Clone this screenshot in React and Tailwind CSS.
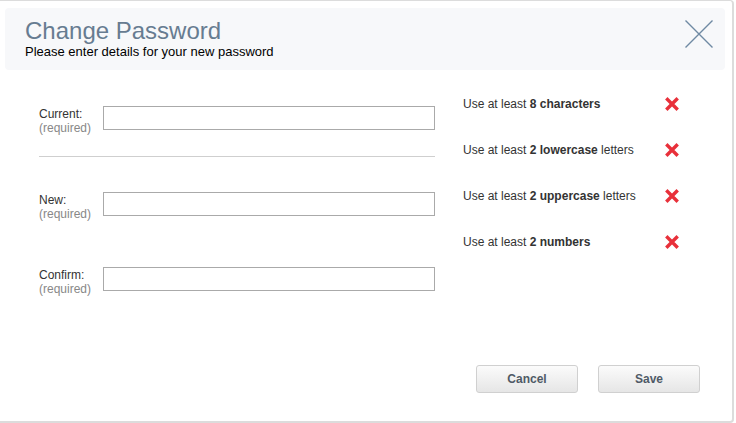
import React from 'react';

const rules = [
  { pre: 'Use at least ', bold: '8 characters', post: '' },
  { pre: 'Use at least ', bold: '2 lowercase', post: ' letters' },
  { pre: 'Use at least ', bold: '2 uppercase', post: ' letters' },
  { pre: 'Use at least ', bold: '2 numbers', post: '' },
];

function Cross() {
  return (
    <svg width="14" height="14" viewBox="0 0 14 14" className="shrink-0">
      <path d="M2.5 2.5L11.5 11.5M11.5 2.5L2.5 11.5" stroke="#e8303a" strokeWidth="3.4" strokeLinecap="square" />
    </svg>
  );
}

function Field({ label, className }) {
  return (
    <div className={`flex items-start ${className}`}>
      <div className="w-[64px] pt-[1px] text-[12px] leading-[14px]">
        <div className="text-[#333]">{label}</div>
        <div className="text-[#888]">(required)</div>
      </div>
      <input
        type="password"
        className="w-[332px] h-[24px] border border-[#aaa] bg-white outline-none"
      />
    </div>
  );
}

export default function App() {
  return (
    <div
      className="w-[736px] h-[423px] bg-white"
      style={{ fontFamily: '"Liberation Sans", Arial, sans-serif' }}
    >
      <div className="w-[734px] h-[423px] flex flex-col border-t border-r-2 border-b-2 border-[#dcdcdc] rounded-tr-[4px] rounded-br-[4px]">
        <div className="mt-[7px] ml-[5px] mr-[7px] h-[62px] rounded-[4px] bg-[#f7f8fa] flex items-start justify-between pl-[20px] pr-[11px]">
          <div className="mt-[10px]">
            <div className="text-[24px] leading-[26px] text-[#677c91]">Change Password</div>
            <div className="text-[13px] leading-[16px] text-black">Please enter details for your new password</div>
          </div>
          <svg width="30" height="30" viewBox="0 0 30 30" className="mt-[11px]">
            <path d="M1.5 1.5L28.5 28.5M28.5 1.5L1.5 28.5" stroke="#6f8aa3" strokeWidth="1.4" />
          </svg>
        </div>

        <div className="flex pl-[39px] mt-[36px]">
          <div className="w-[396px]">
            <Field label="Current:" />
            <div className="mt-[21px] h-px bg-[#cfcfcf]" />
            <Field label="New:" className="mt-[35px]" />
            <Field label="Confirm:" className="mt-[46px]" />
          </div>
          <div className="ml-[28px] -mt-[9px] flex flex-col gap-[32px]">
            {rules.map((r, i) => (
              <div key={i} className="flex items-center h-[14px]">
                <div className="w-[202px] text-[12px] leading-[14px] text-[#333]">
                  {r.pre}
                  <b>{r.bold}</b>
                  {r.post}
                </div>
                <Cross />
              </div>
            ))}
          </div>
        </div>

        <div className="mt-auto mb-[28px] flex justify-end gap-[20px] pr-[32px]">
          <button className="w-[102px] h-[28px] rounded-[3px] border border-[#d0d0d0] bg-gradient-to-b from-[#fbfbfb] to-[#e6e6e6] text-[12px] font-bold text-[#4f5a66]">
            Cancel
          </button>
          <button className="w-[102px] h-[28px] rounded-[3px] border border-[#d0d0d0] bg-gradient-to-b from-[#fbfbfb] to-[#e6e6e6] text-[12px] font-bold text-[#4f5a66]">
            Save
          </button>
        </div>
      </div>
    </div>
  );
}
